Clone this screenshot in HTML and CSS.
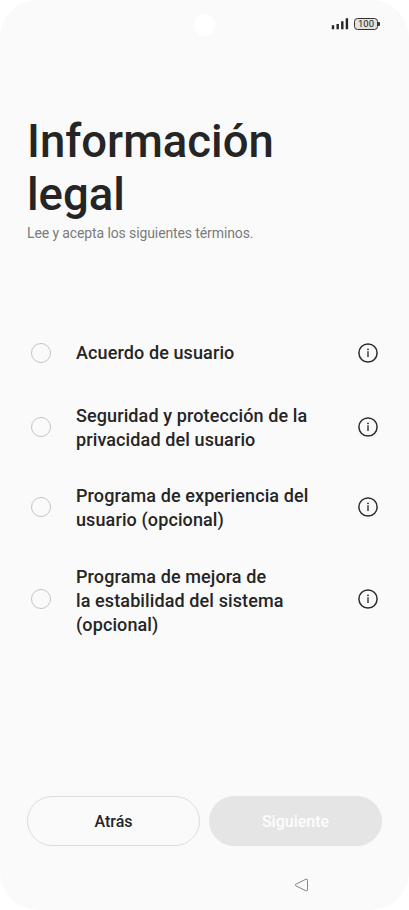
FILE: index.html
```html
<!DOCTYPE html>
<html lang="es">
<head>
<meta charset="utf-8">
<title>Información legal</title>
<link rel="stylesheet" href="styles.css">
</head>
<body>
<svg class="defs" aria-hidden="true">
  <symbol id="info" viewBox="0 0 22 22">
    <circle cx="11" cy="11" r="9.1" fill="none" stroke="#2c2c2c" stroke-width="1.5"/>
    <circle cx="11" cy="7.300" r="0.900" fill="#252525"/>
    <path d="M11 9.200v5.800" fill="none" stroke="#333" stroke-width="1.400"/>
  </symbol>
</svg>
<div class="screen">
  <header class="status">
    <span class="camera"></span>
    <svg class="signal" width="18" height="12" viewBox="0 0 18 12"><path d="M2 11.300V7.300M6.700 11.300V6M11.300 11.300V3.200M15.900 11.300V.2" fill="none" stroke="#252525" stroke-width="2.400"/></svg>
    <span class="battery">100</span>
  </header>
  <main>
    <h1>Información<br>legal</h1>
    <p class="sub">Lee y acepta los siguientes términos.</p>
    <ul class="terms">
      <li><span class="radio"></span><span class="label">Acuerdo de usuario</span><svg class="info"><use href="#info"/></svg></li>
      <li><span class="radio"></span><span class="label">Seguridad y protección de la<br>privacidad del usuario</span><svg class="info"><use href="#info"/></svg></li>
      <li><span class="radio"></span><span class="label">Programa de experiencia del<br>usuario (opcional)</span><svg class="info"><use href="#info"/></svg></li>
      <li><span class="radio"></span><span class="label">Programa de mejora de<br>la estabilidad del sistema<br>(opcional)</span><svg class="info"><use href="#info"/></svg></li>
    </ul>
  </main>
  <footer class="actions">
    <button class="back">Atrás</button>
    <button class="next" disabled>Siguiente</button>
  </footer>
  <nav class="nav"><svg width="15" height="14" viewBox="0 0 15 14"><path d="M1.800 6.200 12 1.200q1.500-.5 1.500 1v9.600q0 1.500-1.500 1L1.800 7.800q-1.200-.8 0-1.600z" fill="none" stroke="#858585" stroke-width="1" stroke-linejoin="round"/></svg></nav>
</div>
</body>
</html>
```
FILE: styles.css
```css
* { box-sizing: border-box; }
body { margin: 0; background: #fff; font-family: Roboto, sans-serif; color: #252525; }
.defs { position: absolute; width: 0; height: 0; }
.screen { width: 409px; height: 910px; background: #fafafa; border-radius: 38px; display: flex; flex-direction: column; overflow: hidden; }
.status { position: relative; height: 47px; display: flex; justify-content: flex-end; align-items: center; gap: 5px; padding-right: 31px; }
.camera { position: absolute; left: 194px; top: 14px; width: 21px; height: 22px; border-radius: 50%; background: #fff; }
.battery { position: relative; width: 24px; height: 12px; border: 1px solid #333; border-radius: 3.5px; background: #e2e2e2; font: 400 9.5px/10px Roboto, sans-serif; text-align: center; }
.battery::after { content: ""; position: absolute; left: 23px; top: 3px; width: 1.5px; height: 4px; background: #333; border-radius: 0 1px 1px 0; }
main { padding: 68px 27px 0; height: 749px; }
h1 { margin: 0; font-size: 45.5px; line-height: 53px; font-weight: 500; }
.sub { margin: 3px 0 0; font-size: 14px; line-height: 18px; letter-spacing: -0.11px; color: #7a7a7a; }
.terms { list-style: none; margin: 83px 0 0; padding: 0 3px; }
.terms li { display: flex; align-items: center; padding: 15px 0; }
.terms li:first-child { padding: 14.5px 0 21.5px; }
.terms li:last-child { padding: 14px 0; }
.radio { width: 20px; height: 20px; margin-left: 1px; border: 1px solid #c4c4c4; border-radius: 50%; }
.label { flex: 1; margin-left: 25px; padding-top: 2px; font-size: 18px; line-height: 24px; font-weight: 500; letter-spacing: 0.11px; }
.terms li:first-child .label { padding: 1px 0; }
.terms li:last-child .label { padding-top: 4px; }
.info { width: 22px; height: 22px; }
.actions { display: flex; gap: 9px; padding: 0 27px; }
.actions button { flex: 1; height: 50px; border-radius: 25px; border: 1px solid #ddd; background: transparent; font: 500 16px Roboto, sans-serif; color: #252525; padding: 1px 0 0; }
.actions .next { background: #e5e5e5; border-color: #e5e5e5; color: #fdfdfd; }
.nav { padding: 32px 0 0 294px; line-height: 0; }
```
